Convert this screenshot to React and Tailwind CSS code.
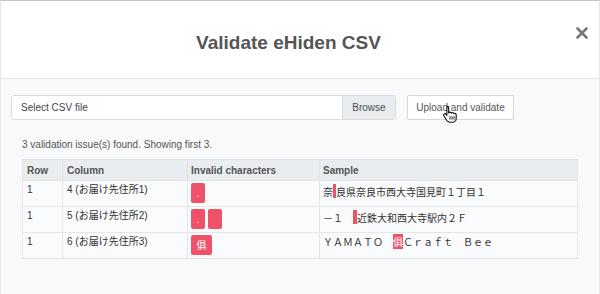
import React from "react";

const rows = [
  {
    row: "1",
    column: "4 (お届け先住所1)",
    chars: [{ label: ".", w: "w-[14px]" }],
    sample: (
      <>
        奈<span className="inline-block w-[3px] h-[14px] align-[-2px] bg-[#ef5168]"></span>良県奈良市西大寺国見町１丁目１
      </>
    ),
  },
  {
    row: "1",
    column: "5 (お届け先住所2)",
    chars: [
      { label: ".", w: "w-[14px]" },
      { label: "", w: "w-[14px]" },
    ],
    sample: (
      <>
        －１　<span className="inline-block w-[4px] h-[14px] align-[-2px] bg-[#ef5168]"></span>近鉄大和西大寺駅内２Ｆ
      </>
    ),
  },
  {
    row: "1",
    column: "6 (お届け先住所3)",
    chars: [{ label: "俱", w: "w-[21px]" }],
    sample: (
      <>
        ＹＡＭＡＴＯ　<span className="bg-[#ef5168] text-white">俱</span>Ｃｒａｆｔ　Ｂｅｅ
      </>
    ),
  },
];

function HandCursor() {
  return (
    <svg
      className="absolute left-[35px] top-[9px]"
      width="14"
      height="18"
      viewBox="0 0 12 16"
    >
      <path
        d="M3.5 1.2c.8 0 1.3.6 1.3 1.3v4.6c.2-.5.7-.8 1.2-.8.6 0 1.1.4 1.2 1 .2-.4.6-.6 1.1-.6.6 0 1.1.5 1.2 1 .2-.2.5-.3.8-.3.7 0 1.2.6 1.2 1.3v3.2c0 1.9-1.5 3.4-3.4 3.4H6c-1.2 0-2.2-.6-2.9-1.5L.6 9.5c-.4-.6-.2-1.3.3-1.6.5-.3 1.1-.2 1.5.3l.8 1V2.5c0-.7.5-1.3 1.3-1.3z"
        fill="#fff"
        stroke="#111"
        strokeWidth="1"
        strokeLinejoin="round"
      />
      <path d="M6 10v3M7.8 10v3M9.6 10v3" stroke="#111" strokeWidth="0.8" />
    </svg>
  );
}

export default function App() {
  return (
    <div
      className="w-[600px] h-[294px] overflow-hidden bg-[#f8f9fb] border-t border-t-[#c4c4c4] border-x border-x-[#e6e6e6] text-[#333]"
      style={{ fontFamily: '"Liberation Sans", "Noto Sans CJK JP", sans-serif' }}
    >
      <div className="h-[78px] bg-white border-b border-[#e3e3e3] flex items-start">
        <h1 className="flex-1 text-center pt-[32px] text-[19px] leading-[19px] font-bold text-[#555]">
          Validate eHiden CSV
        </h1>
        <div className="pt-[26px] pr-[11px]">
          <svg width="12" height="12" viewBox="0 0 12 12">
            <path d="M1.5 1.5l9 9M10.5 1.5l-9 9" stroke="#777" strokeWidth="2.6" strokeLinecap="round" />
          </svg>
        </div>
      </div>

      <div className="px-[10px] pt-[16px]">
        <div className="flex items-center gap-[11px]">
          <div className="flex w-[385px] h-[25px] border border-[#d9dcdf] rounded-[3px] bg-white overflow-hidden text-[10px]">
            <div className="flex-1 flex items-center pl-[9px] text-[#444]">Select CSV file</div>
            <div className="w-[53px] flex items-center justify-center bg-[#e9ecef] border-l border-[#d9dcdf] text-[#495057]">
              Browse
            </div>
          </div>
          <div className="relative w-[107px] h-[25px] flex items-center justify-center border border-[#d6d6d6] rounded-[2px] bg-white text-[10px] text-[#555]">
            Upload and validate
            <HandCursor />
          </div>
        </div>

        <div className="px-[11px]">
          <p className="mt-[19px] text-[10px] leading-[12px] text-[#555]">
            3 validation issue(s) found. Showing first 3.
          </p>

          <table className="mt-[8px] w-[556px] border-collapse border border-[#e4e7ea] text-[10px] table-fixed">
            <colgroup>
              <col className="w-[40px]" />
              <col className="w-[125px]" />
              <col className="w-[132px]" />
              <col />
            </colgroup>
            <thead>
              <tr className="bg-[#eaedf0] h-[21px]">
                <th className="border border-[#e0e3e6] text-left font-bold text-[#555] px-[4px] py-0">Row</th>
                <th className="border border-[#e0e3e6] text-left font-bold text-[#555] px-[4px] py-0">Column</th>
                <th className="border border-[#e0e3e6] text-left font-bold text-[#555] px-[3px] py-0">Invalid characters</th>
                <th className="border border-[#e0e3e6] text-left font-bold text-[#555] px-[3px] py-0">Sample</th>
              </tr>
            </thead>
            <tbody>
              {rows.map((r, i) => (
                <tr key={i} className="h-[26px] bg-[#fafbfc]">
                  <td className="border border-[#e4e7ea] align-top px-[4px] pt-[3px] leading-[12px]">{r.row}</td>
                  <td className="border border-[#e4e7ea] align-top px-[4px] pt-[3px] leading-[12px]">{r.column}</td>
                  <td className="border border-[#e4e7ea] align-top px-[3px] pt-[2px] pb-[2px]">
                    <div className="flex gap-[3px]">
                      {r.chars.map((c, j) => (
                        <span
                          key={j}
                          className={`${c.w} h-[20px] flex items-center justify-center rounded-[2px] bg-[#ef5168] text-white text-[10px]`}
                        >
                          {c.label}
                        </span>
                      ))}
                    </div>
                  </td>
                  <td
                    className="border border-[#e4e7ea] align-top px-[3px] pt-[3px] leading-[12px] text-[#333] whitespace-nowrap"
                    style={{ fontFamily: '"Noto Sans CJK JP", sans-serif' }}
                  >
                    {r.sample}
                  </td>
                </tr>
              ))}
            </tbody>
          </table>
        </div>
      </div>
    </div>
  );
}
